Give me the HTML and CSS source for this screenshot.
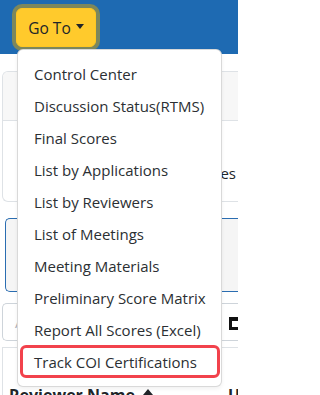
FILE: index.html
```html
<!DOCTYPE html>
<html lang="en">
<head>
<meta charset="utf-8">
<title>Go To</title>
<link rel="stylesheet" href="styles.css">
</head>
<body>
<header class="topbar">
  <div class="dropdown">
    <button class="btn-goto" type="button">Go To<span class="caret"></span></button>
    <ul class="menu">
      <li class="item">Control Center</li>
      <li class="item">Discussion Status(RTMS)</li>
      <li class="item">Final Scores</li>
      <li class="item">List by Applications</li>
      <li class="item">List by Reviewers</li>
      <li class="item">List of Meetings</li>
      <li class="item">Meeting Materials</li>
      <li class="item">Preliminary Score Matrix</li>
      <li class="item">Report All Scores (Excel)</li>
      <li class="item item-marked">Track COI Certifications</li>
    </ul>
  </div>
</header>
<main class="page">
  <section class="card">
    <div class="card-head"></div>
    <div class="card-body"><span class="card-text">Scores</span></div>
  </section>
  <section class="panel"></section>
  <div class="search">
    <span class="placeholder">A</span>
    <span class="cal"></span>
  </div>
  <div class="table">
    <div class="th-row">
      <span class="th">Reviewer Name<svg class="sort" width="10" height="12" viewBox="0 0 10 12"><path d="M5 0 L10 6 H6.5 V12 H3.5 V6 H0 Z" fill="#212529"/></svg></span>
      <span class="th th-u">U</span>
    </div>
  </div>
</main>
</body>
</html>
```
FILE: styles.css
```css
* { box-sizing: border-box; }
html, body { margin: 0; padding: 0; }
html { overflow: hidden; }
body {
  width: 238px;
  height: 395px;
  overflow: hidden;
  background: #fff;
  font-family: "Open Sans", "Noto Sans", sans-serif;
  font-size: 15px;
  color: #212529;
}
.topbar {
  height: 54px;
  background: #1e6ab2;
  padding: 8px 0 0 16px;
}
.dropdown { position: relative; display: inline-block; }
.btn-goto {
  height: 39px;
  width: 80px;
  border: 1px solid #ffc720;
  border-radius: 6px;
  background: #ffca2c;
  color: #212529;
  font-family: inherit;
  font-size: 15.5px;
  padding: 0;
  box-shadow: 0 0 0 4px rgba(217, 164, 6, 0.5);
  display: flex;
  align-items: center;
  justify-content: center;
}
.caret {
  display: inline-block;
  margin-left: 5px;
  margin-top: -3px;
  border-top: 5px solid #212529;
  border-left: 4px solid transparent;
  border-right: 4px solid transparent;
}
.menu {
  position: absolute;
  top: 41px;
  left: 1px;
  width: 205px;
  margin: 0;
  padding: 8px 0;
  list-style: none;
  background: #fff;
  border: 1px solid rgba(0, 0, 0, 0.15);
  border-radius: 6px;
  box-shadow: 0 2px 4px rgba(0, 0, 0, 0.06);
  z-index: 5;
}
.item {
  position: relative;
  height: 32px;
  line-height: 32px;
  padding: 0 16px;
  white-space: nowrap;
  color: #2b2f33;
}
.item-marked::after {
  content: "";
  position: absolute;
  left: 2px;
  right: 1px;
  top: -1px;
  bottom: 0;
  border: 3px solid #f2424c;
  border-radius: 6px;
}
.page {
  width: 238px;
  padding: 17px 0 0 2px;
  display: flex;
  flex-direction: column;
}
.card {
  height: 131px;
  border: 1px solid #dee2e6;
  border-right: none;
  border-radius: 6px 0 0 6px;
  display: flex;
  flex-direction: column;
  overflow: hidden;
}
.card-head {
  height: 49px;
  background: #f7f7f7;
  border-bottom: 1px solid #dee2e6;
}
.card-body {
  flex: 1;
  display: flex;
  align-items: flex-start;
  padding: 42px 2px 0 0;
  justify-content: flex-end;
}
.panel {
  margin: 16px 0 0 3px;
  height: 74px;
  border: 1px solid #2a6db1;
  border-right: none;
  border-radius: 5px 0 0 5px;
  background: #f5f5f5;
}
.search {
  margin-top: 11px;
  height: 38px;
  border: 1px solid #ced4da;
  border-right: none;
  border-radius: 5px 0 0 5px;
  display: flex;
  align-items: center;
  padding-left: 12px;
}
.placeholder { color: #adb5bd; font-size: 15px; }
.cal {
  margin-left: auto;
  width: 9px;
  height: 13px;
  border: 3px solid #111;
  border-right: none;
  border-top-width: 4px;
  margin-top: 3px;
}
.table {
  margin-top: 6px;
  height: 60px;
  border-top: 1px solid #dee2e6;
  border-left: 1px solid #dee2e6;
  overflow: hidden;
}
.th-row {
  display: flex;
  padding: 36px 0 0 6px;
  font-weight: 700;
  font-size: 16px;
  white-space: nowrap;
}
.th { white-space: nowrap; }
.sort { margin-left: 8px; }
.th-u { margin-left: auto; width: 10px; overflow: hidden; }
```
